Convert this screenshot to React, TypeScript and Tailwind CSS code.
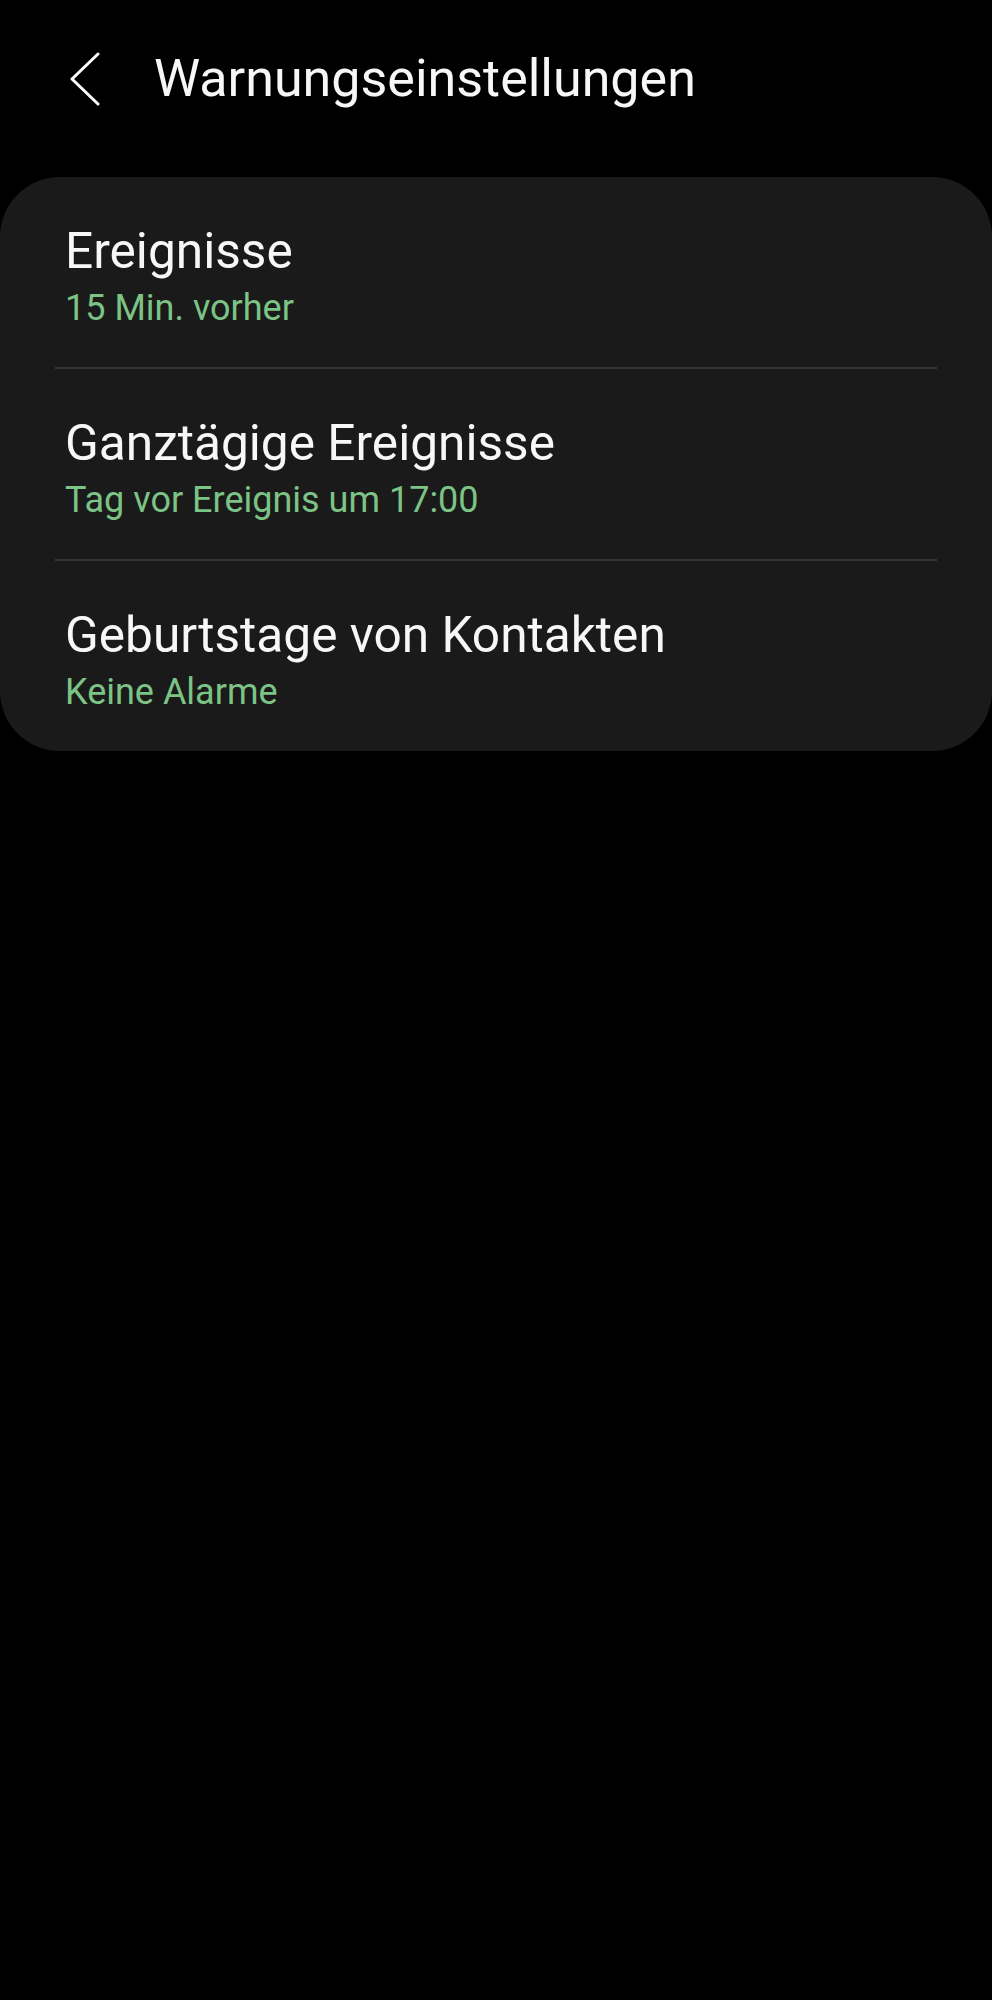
const alerts = [
  { title: "Ereignisse", value: "15 Min. vorher" },
  { title: "Ganztägige Ereignisse", value: "Tag vor Ereignis um 17:00" },
  { title: "Geburtstage von Kontakten", value: "Keine Alarme" },
];

function BackIcon() {
  return (
    <svg width="30" height="54" viewBox="0 0 30 54" fill="none" stroke="currentColor" strokeWidth={3} strokeLinecap="round" strokeLinejoin="round">
      <polyline points="28,2 2,27 28,52" />
    </svg>
  );
}

export default function App() {
  return (
    <div className="min-h-[2000px] bg-black text-[#f7f7f7]" style={{ fontFamily: "Roboto, 'Noto Sans', sans-serif" }}>
      <header className="flex h-[158px] items-center pl-[70px]">
        <button className="text-white">
          <BackIcon />
        </button>
        <h1 className="ml-[54px] text-[52px] leading-none font-normal">Warnungseinstellungen</h1>
      </header>

      <div className="mt-[19px] rounded-[60px] bg-[#1a1a1a]">
        {alerts.map((item, i) => (
          <div key={item.title}>
            {i > 0 && <div className="mx-[55px] h-[2px] bg-[#363636]" />}
            <div className="pt-[45px] pb-[38px] pl-[65px]">
              <div className="text-[49.6px] leading-[58px]">{item.title}</div>
              <div className="mt-[7px] text-[36px] leading-[42px] text-[#7cc386]">{item.value}</div>
            </div>
          </div>
        ))}
      </div>
    </div>
  );
}
